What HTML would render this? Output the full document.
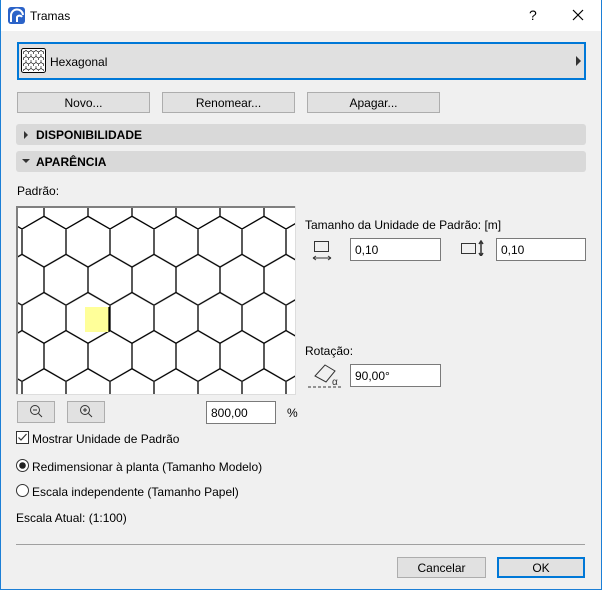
<!DOCTYPE html>
<html><head><meta charset="utf-8"><style>
*{margin:0;padding:0;box-sizing:border-box}
body{width:602px;height:590px;overflow:hidden;font-family:"Liberation Sans",sans-serif;font-size:12px;color:#000;background:#f0f0f0;position:relative}
.a{position:absolute}
.win{position:absolute;left:0;top:0;width:602px;height:590px;border:1px solid #1c7fd6;border-top:none}
.title{left:1px;top:0;width:600px;height:31px;background:#fff}
.btn{position:absolute;background:#e1e1e1;border:1px solid #adadad;text-align:center;line-height:20px}
.sec{position:absolute;left:16px;width:570px;height:21px;background:#d9d9d9;border-radius:3px;font-weight:bold;line-height:22px;padding-left:20px}
.inp{position:absolute;background:#fff;border:1px solid #7a7a7a;height:23px;line-height:22px;padding-left:4px}
</style></head><body>
<div class="win"></div>
<div class="a title"></div>
<svg class="a" style="left:8px;top:7px" width="17" height="17"><rect x="0" y="0" width="17" height="17" rx="3" fill="#2b63c8"/><path d="M3 15 V9 A6 6 0 0 1 15 8 M9 15 V10 A3 3 0 0 1 14 10" stroke="#fff" stroke-width="2" fill="none"/></svg>
<div class="a" style="left:30px;top:9px;font-size:12px">Tramas</div>
<div class="a" style="left:529px;top:7px;font-size:14px">?</div>
<svg class="a" style="left:572px;top:9px" width="12" height="12"><path d="M1 1L11 11M11 1L1 11" stroke="#000" stroke-width="1.2"/></svg>

<div class="a" style="left:17px;top:42px;width:569px;height:38px;background:#e0e0e0;border:2px solid #0078d7"></div>
<svg class="a" style="left:21px;top:48px" width="25" height="25"><defs><pattern id="sh" width="5" height="6" patternUnits="userSpaceOnUse"><path d="M0 0V2.5L2.5 4V6M5 0V2.5L2.5 4" stroke="#000" stroke-width="0.6" fill="none"/></pattern></defs><rect x="0.5" y="0.5" width="24" height="24" rx="2" fill="#fff" stroke="#000"/><rect x="2" y="2" width="21" height="21" fill="url(#sh)"/></svg>
<div class="a" style="left:50px;top:55px">Hexagonal</div>
<svg class="a" style="left:576px;top:56px" width="6" height="10"><path d="M0 0L5 5L0 10Z" fill="#333"/></svg>

<div class="btn" style="left:17px;top:92px;width:133px;height:21px">Novo...</div>
<div class="btn" style="left:162px;top:92px;width:133px;height:21px">Renomear...</div>
<div class="btn" style="left:307px;top:92px;width:133px;height:21px">Apagar...</div>

<div class="sec" style="top:124px">DISPONIBILIDADE</div>
<svg class="a" style="left:24px;top:131px" width="5" height="8"><path d="M0 0L4 4L0 8Z" fill="#333"/></svg>
<div class="sec" style="top:151px">APARÊNCIA</div>
<svg class="a" style="left:22px;top:159px" width="8" height="5"><path d="M0 0H8L4 4Z" fill="#333"/></svg>

<div class="a" style="left:17px;top:184px">Padrão:</div>
<svg class="a" style="left:16px;top:206px" width="280" height="189">
<defs><pattern id="hx" x="6" y="23" width="44" height="76.2" patternUnits="userSpaceOnUse">
<path d="M0 0V25.4L22 38.1L44 25.4V0M22 38.1V63.5L0 76.2M22 63.5L44 76.2" stroke="#000" stroke-width="1.3" fill="none"/></pattern></defs>
<rect width="280" height="189" fill="#fff"/>
<rect width="280" height="189" fill="url(#hx)"/>
<rect x="69" y="101" width="24" height="25" fill="#ffff99"/>
<path d="M93 101V126" stroke="#000" stroke-width="1.3"/>
<path d="M1 189V1H279" stroke="#808080" stroke-width="2" fill="none"/>
<path d="M0 188.5H279.5V0" stroke="#ddd" fill="none"/>
</svg>

<div class="a" style="left:305px;top:218px">Tamanho da Unidade de Padrão: [m]</div>
<svg class="a" style="left:312px;top:238px" width="20" height="24"><rect x="2.5" y="3.5" width="14" height="10" fill="none" stroke="#333"/><path d="M1 20H19M1 20L4 18M1 20L4 22M19 20L16 18M19 20L16 22" stroke="#333" fill="none"/></svg>
<div class="inp" style="left:350px;top:238px;width:91px">0,10</div>
<svg class="a" style="left:460px;top:240px" width="26" height="16"><rect x="1.5" y="3.5" width="14" height="10" fill="none" stroke="#333"/><path d="M21 2V15M19 4L21 1L23 4M19 13L21 16L23 13" stroke="#333" stroke-width="1.5" fill="none"/></svg>
<div class="inp" style="left:496px;top:238px;width:90px">0,10</div>

<div class="a" style="left:305px;top:344px">Rotação:</div>
<svg class="a" style="left:307px;top:362px" width="36" height="26"><path d="M8 14L18 3L28 9L19 20Z" fill="none" stroke="#333"/><path d="M1 25H34" stroke="#333" stroke-dasharray="3 2"/><text x="25" y="23" font-size="10" fill="#333" font-family="Liberation Sans,sans-serif">α</text></svg>
<div class="inp" style="left:350px;top:364px;width:91px">90,00°</div>

<div class="btn" style="left:17px;top:401px;width:38px;height:22px"></div>
<svg class="a" style="left:29px;top:404px" width="16" height="16"><circle cx="6" cy="6" r="4.5" fill="none" stroke="#333"/><path d="M4 6H8M9.5 9.5L13 13" stroke="#333"/></svg>
<div class="btn" style="left:67px;top:401px;width:38px;height:22px"></div>
<svg class="a" style="left:79px;top:404px" width="16" height="16"><circle cx="6" cy="6" r="4.5" fill="none" stroke="#333"/><path d="M4 6H8M6 4V8M9.5 9.5L13 13" stroke="#333"/></svg>
<div class="inp" style="left:206px;top:401px;width:70px">800,00</div>
<div class="a" style="left:287px;top:406px">%</div>

<svg class="a" style="left:16px;top:431px" width="14" height="14"><rect x="0.5" y="0.5" width="12" height="12" fill="#fff" stroke="#333"/><path d="M2.5 6.5L5 9L10.5 3" stroke="#333" stroke-width="1.2" fill="none"/></svg>
<div class="a" style="left:32px;top:432px">Mostrar Unidade de Padrão</div>
<svg class="a" style="left:16px;top:459px" width="14" height="14"><circle cx="6.5" cy="6.5" r="6" fill="#fff" stroke="#333"/><circle cx="6.5" cy="6.5" r="3.3" fill="#222"/></svg>
<div class="a" style="left:32px;top:460px">Redimensionar à planta (Tamanho Modelo)</div>
<svg class="a" style="left:16px;top:484px" width="14" height="14"><circle cx="6.5" cy="6.5" r="6" fill="#fff" stroke="#333"/></svg>
<div class="a" style="left:32px;top:485px">Escala independente (Tamanho Papel)</div>
<div class="a" style="left:16px;top:511px">Escala Atual: (1:100)</div>

<div class="a" style="left:16px;top:544px;width:569px;height:1px;background:#a0a0a0"></div>
<div class="btn" style="left:397px;top:557px;width:89px;height:21px">Cancelar</div>
<div class="btn" style="left:497px;top:557px;width:88px;height:21px;border:2px solid #0078d7;line-height:18px">OK</div>
</body></html>
